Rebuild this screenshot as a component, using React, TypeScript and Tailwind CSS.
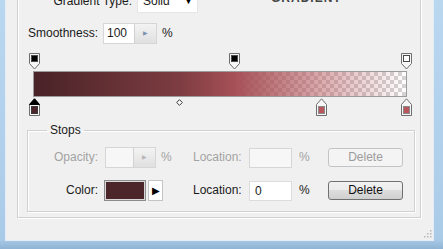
import * as React from "react";

const DARK = "#4b2529";
const RED = "#b9575c";
const TRACK = 372; // inner width of the gradient bar, in px

const opacityStops = [
  { at: 0, fill: "#000000" },
  { at: 0.538, fill: "#000000" },
  { at: 1, fill: "#ffffff" },
];

const colorStops = [
  { at: 0, color: DARK, selected: true },
  { at: 0.774, color: RED, selected: false },
  { at: 1, color: RED, selected: false },
];

const midpoint = 0.39;

const stopLeft = (at: number, w: number) => 1 + at * TRACK - w / 2;

const OpacityStop = ({ fill }: { fill: string }) => (
  <svg width="11" height="17" viewBox="0 0 11 17">
    <path d="M0.5 0.5H10.5V10.5L5.5 16L0.5 10.5Z" fill="#f6f6f6" stroke="#6e6e6e" />
    <rect x="2.5" y="2.5" width="6" height="6" fill={fill} stroke="#4a4a4a" />
  </svg>
);

const ColorStop = ({ color, selected }: { color: string; selected: boolean }) => (
  <svg width="11" height="18" viewBox="0 0 11 18">
    <path d="M5.5 0.8L10.5 6.5V17.5H0.5V6.5Z" fill="#f6f6f6" stroke="#6e6e6e" />
    {selected && <path d="M5.5 0.8L10.5 6.5H0.5Z" fill="#000" stroke="#000" />}
    <rect x="2.5" y="8.5" width="6" height="7" fill={color} stroke={selected ? "#3a3a3a" : "#8a8a8a"} />
  </svg>
);

const Spinner = ({ disabled }: { disabled?: boolean }) => (
  <div className="w-[22px] h-full flex items-center justify-center border-l border-[#d2d2d2] bg-[linear-gradient(#f3f3f3,#e0e0e0)]">
    <span className={`text-[6px] ${disabled ? "text-[#b5b5b5]" : "text-[#7f93b0]"}`}>▶</span>
  </div>
);

const DeleteButton = ({ disabled }: { disabled?: boolean }) => (
  <button
    className={
      disabled
        ? "w-[75px] h-[19px] rounded-[3px] border border-[#c4c4c4] bg-[#f4f4f4] text-[#9b9b9b] leading-[17px]"
        : "w-[75px] h-[19px] rounded-[3px] border border-[#707070] bg-[linear-gradient(#f2f2f2,#ebebeb_50%,#dddddd_50%,#cfcfcf)] text-[#111] leading-[17px]"
    }
  >
    Delete
  </button>
);

export default function App() {
  return (
    <div className="w-[443px] h-[249px] overflow-hidden flex bg-[linear-gradient(#bad7f0,#aacbe8_96%,#8fb3d4)] font-['Liberation_Sans',Arial,sans-serif] text-[12px] leading-[15px] text-[#1a1a1a]">
      <div className="ml-[5px] w-[429px] h-[241px] flex flex-col bg-[#f0f0f0] border-x border-b border-[#e4edf5]">
        <div className="ml-[11px] -mt-[21px] w-[404px] flex flex-col pt-[10px] pb-[5px] border border-[#d0d0d0] shadow-[1px_1px_0_#ffffff,inset_1px_1px_0_#ffffff]">
          {/* gradient type */}
          <div className="flex items-center h-[23px]">
            <span className="w-[114px] text-right">Gradient Type:</span>
            <div className="ml-[5px] w-[61px] h-full flex items-center justify-between bg-white border border-[#e6e6e6] pl-[5px] pr-[4px]">
              <span>Solid</span>
              <span className="text-[9px] text-black">▼</span>
            </div>
            <span className="self-start mt-[1px] ml-[73px] font-bold tracking-[1px] text-[#444]">GRADIENT</span>
          </div>

          {/* smoothness */}
          <div className="flex items-center h-[21px] mt-[10px] pl-[10px]">
            <span className="w-[75px]">Smoothness:</span>
            <div className="w-[54px] h-full flex border border-[#d6d6d6] bg-white">
              <span className="flex-1 pl-[3px] leading-[19px]">100</span>
              <Spinner />
            </div>
            <span className="ml-[5px]">%</span>
          </div>

          {/* gradient slider */}
          <div className="ml-[15px] w-[374px] mt-[9px] flex flex-col">
            <div className="relative h-[18px]">
              {opacityStops.map((s, i) => (
                <div key={i} className="absolute top-0" style={{ left: stopLeft(s.at, 11) }}>
                  <OpacityStop fill={s.fill} />
                </div>
              ))}
            </div>
            <div className="h-[26px] border border-[#9c9c9c] bg-[conic-gradient(#d4d4d4_25%,#ffffff_0_50%,#d4d4d4_0_75%,#ffffff_0)] bg-[length:8px_8px]">
              <div className="h-full bg-[linear-gradient(to_right,rgb(72,35,39)_0%,rgb(125,60,65)_39%,rgb(165,80,86)_53.8%,rgba(185,88,94,0.5)_77.4%,rgba(185,88,94,0)_100%)]" />
            </div>
            <div className="relative h-[18px]">
              {colorStops.map((s, i) => (
                <div key={i} className="absolute top-[1px]" style={{ left: stopLeft(s.at, 11) }}>
                  <ColorStop color={s.color} selected={s.selected} />
                </div>
              ))}
              <div className="absolute top-[2px]" style={{ left: stopLeft(midpoint, 7) }}>
                <svg width="7" height="7" viewBox="0 0 7 7">
                  <path d="M3.5 0.7L6.3 3.5L3.5 6.3L0.7 3.5Z" fill="#fff" stroke="#333" />
                </svg>
              </div>
            </div>
          </div>

          {/* stops */}
          <fieldset className="ml-[9px] mt-[7px] w-[388px] border border-[#d0d0d0] shadow-[1px_1px_0_#ffffff,inset_1px_1px_0_#ffffff] pb-[10px]">
            <legend className="ml-[19px] px-[3px] leading-[16px]">Stops</legend>
            <div className="flex flex-col pt-[9px]">
              <div className="flex items-center h-[21px] text-[#a3a3a3]">
                <span className="w-[70px] text-right">Opacity:</span>
                <div className="ml-[7px] w-[51px] h-full flex border border-[#d6d6d6] bg-[#f7f7f7]">
                  <span className="flex-1" />
                  <Spinner disabled />
                </div>
                <span className="w-[37px] pl-[5px]">%</span>
                <span className="w-[56px]">Location:</span>
                <div className="w-[43px] h-[20px] border border-[#d6d6d6] bg-[#f7f7f7]" />
                <span className="w-[36px] pl-[7px]">%</span>
                <DeleteButton disabled />
              </div>
              <div className="flex items-center h-[21px] mt-[12px]">
                <span className="w-[70px] text-right">Color:</span>
                <div className="ml-[6px] w-[42px] h-[21px] border border-[#8c8c8c] p-[1px] bg-[#d8d8d8]">
                  <div className="w-full h-full" style={{ background: DARK }} />
                </div>
                <div className="ml-[2px] w-[15px] h-[21px] flex items-center justify-center bg-white border border-[#c4c4c4]">
                  <span className="text-[10px] text-black">▶</span>
                </div>
                <span className="w-[30px]" />
                <span className="w-[56px]">Location:</span>
                <div className="w-[43px] h-[20px] border border-[#dcdcdc] bg-white pl-[5px] leading-[18px]">0</div>
                <span className="w-[36px] pl-[7px]">%</span>
                <DeleteButton />
              </div>
            </div>
          </fieldset>
        </div>

        <div className="flex-1 flex items-end justify-end pr-[1px] pb-[2px]">
          <svg width="9" height="9" viewBox="0 0 9 9">
            {[
              [7, 1],
              [4, 4],
              [7, 4],
              [1, 7],
              [4, 7],
              [7, 7],
            ].map(([x, y], i) => (
              <rect key={i} x={x} y={y} width="1.5" height="1.5" fill="#b8b8b8" />
            ))}
          </svg>
        </div>
      </div>
    </div>
  );
}
